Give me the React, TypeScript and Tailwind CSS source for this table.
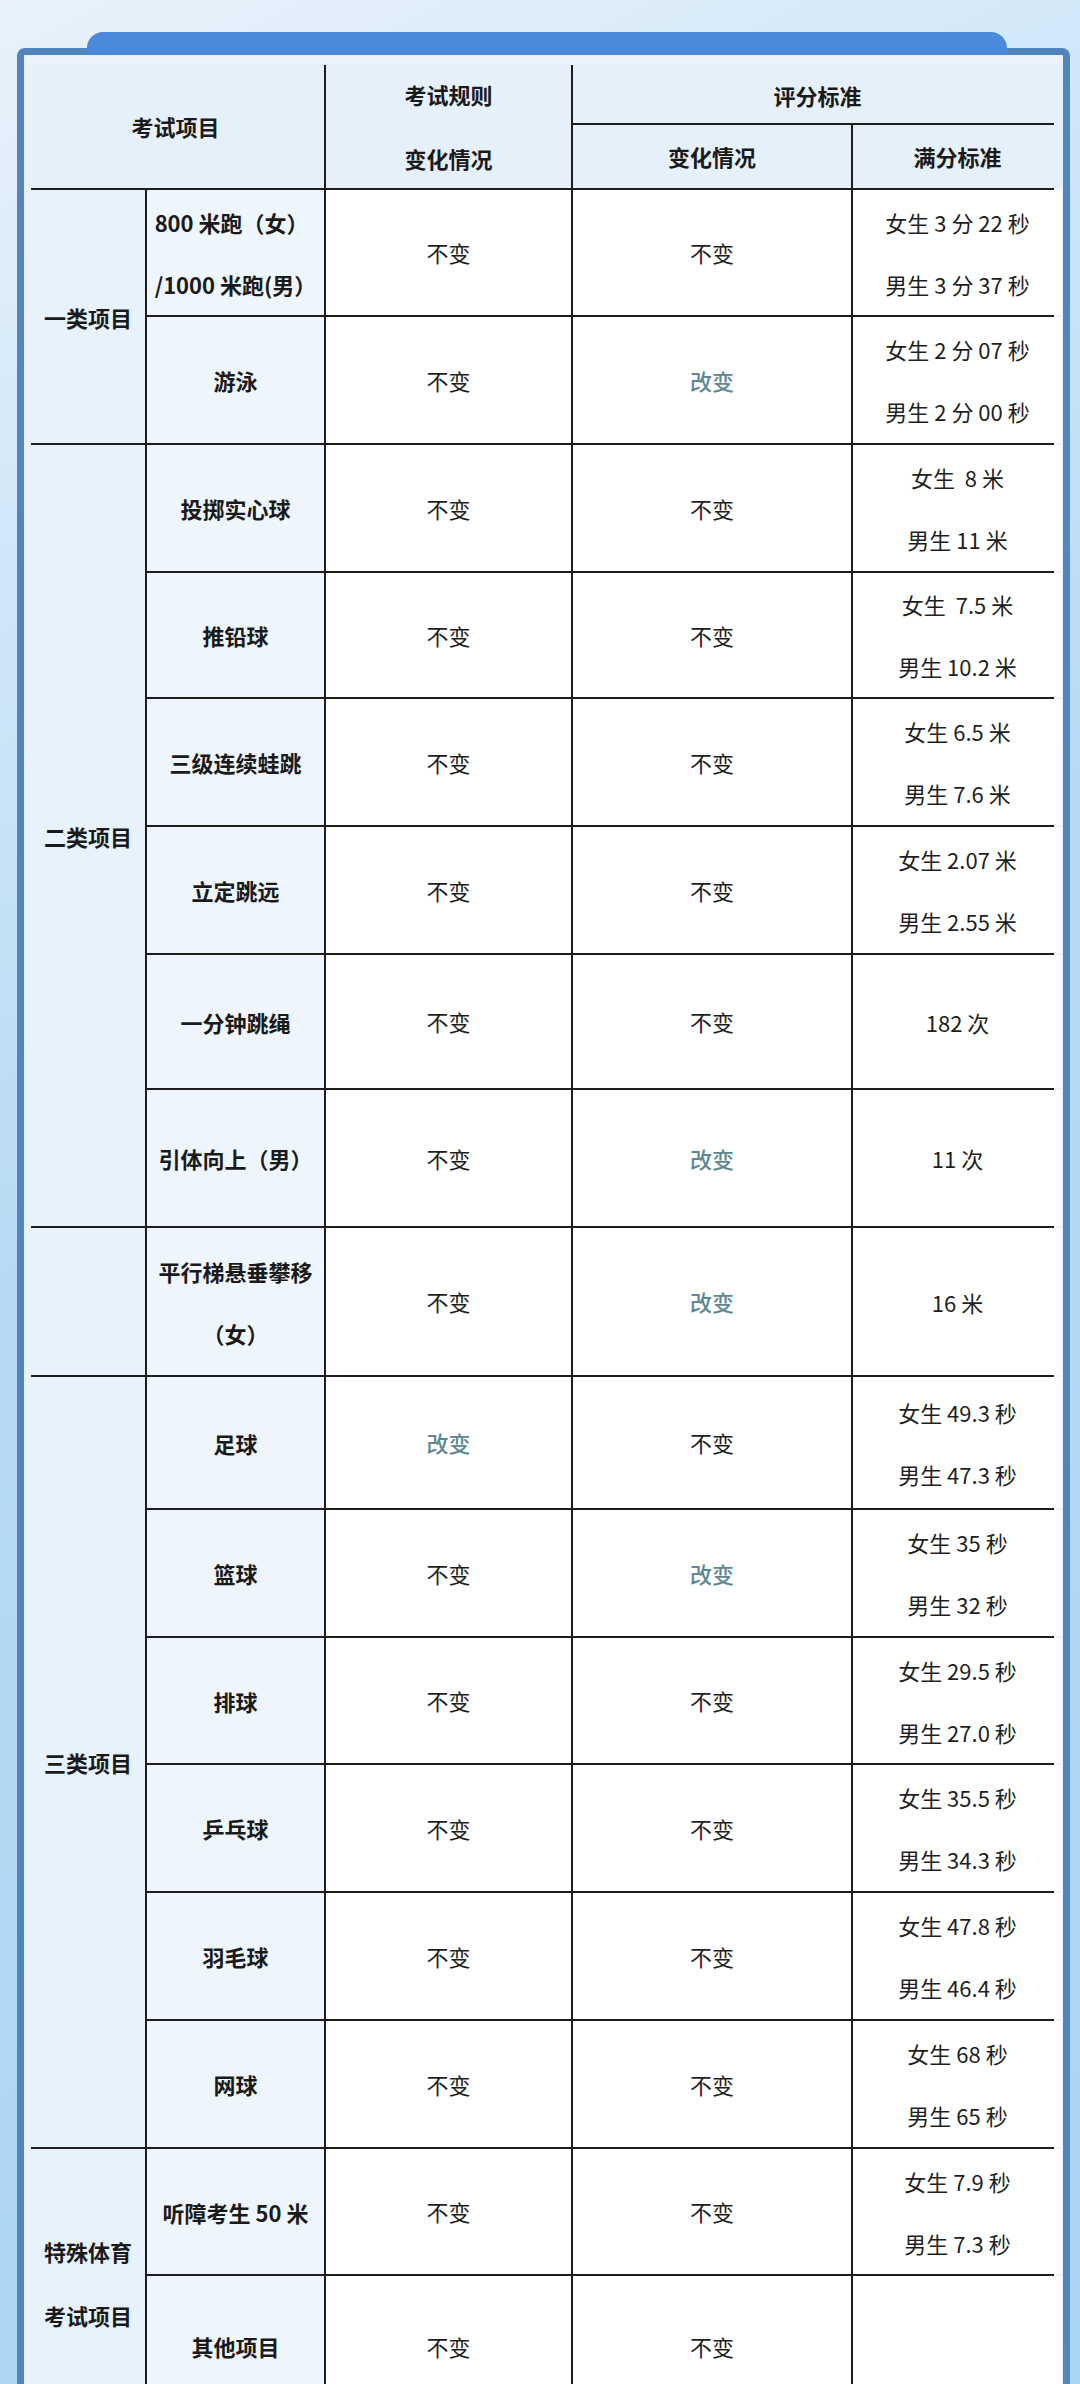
import type { ReactNode } from 'react'

interface BodyRow {
  row: string
  item: ReactNode
  rule: string
  score: string
  full: string[]
}

const rows: BodyRow[] = [
  {
    row: 'row-start-3',
    item: (
      <div className="text-left">
        <div>800 米跑（女）</div>
        <div>/1000 米跑(男）</div>
      </div>
    ),
    rule: '不变',
    score: '不变',
    full: ['女生 3 分 22 秒', '男生 3 分 37 秒'],
  },
  { row: 'row-start-4', item: '游泳', rule: '不变', score: '改变', full: ['女生 2 分 07 秒', '男生 2 分 00 秒'] },
  { row: 'row-start-5', item: '投掷实心球', rule: '不变', score: '不变', full: ['女生\u00a0\u00a08 米', '男生 11 米'] },
  { row: 'row-start-6', item: '推铅球', rule: '不变', score: '不变', full: ['女生\u00a0\u00a07.5 米', '男生 10.2 米'] },
  { row: 'row-start-7', item: '三级连续蛙跳', rule: '不变', score: '不变', full: ['女生 6.5 米', '男生 7.6 米'] },
  { row: 'row-start-8', item: '立定跳远', rule: '不变', score: '不变', full: ['女生 2.07 米', '男生 2.55 米'] },
  { row: 'row-start-9', item: '一分钟跳绳', rule: '不变', score: '不变', full: ['182 次'] },
  { row: 'row-start-10', item: '引体向上（男）', rule: '不变', score: '改变', full: ['11 次'] },
  {
    row: 'row-start-11',
    item: (
      <div>
        <div>平行梯悬垂攀移</div>
        <div>（女）</div>
      </div>
    ),
    rule: '不变',
    score: '改变',
    full: ['16 米'],
  },
  { row: 'row-start-12', item: '足球', rule: '改变', score: '不变', full: ['女生 49.3 秒', '男生 47.3 秒'] },
  { row: 'row-start-13', item: '篮球', rule: '不变', score: '改变', full: ['女生 35 秒', '男生 32 秒'] },
  { row: 'row-start-14', item: '排球', rule: '不变', score: '不变', full: ['女生 29.5 秒', '男生 27.0 秒'] },
  { row: 'row-start-15', item: '乒乓球', rule: '不变', score: '不变', full: ['女生 35.5 秒', '男生 34.3 秒'] },
  { row: 'row-start-16', item: '羽毛球', rule: '不变', score: '不变', full: ['女生 47.8 秒', '男生 46.4 秒'] },
  { row: 'row-start-17', item: '网球', rule: '不变', score: '不变', full: ['女生 68 秒', '男生 65 秒'] },
  { row: 'row-start-18', item: '听障考生 50 米', rule: '不变', score: '不变', full: ['女生 7.9 秒', '男生 7.3 秒'] },
  { row: 'row-start-19', item: '其他项目', rule: '不变', score: '不变', full: [] },
]

const groups = [
  { cls: 'row-start-3 row-span-2', lines: ['一类项目'] },
  { cls: 'row-start-5 row-span-6', lines: ['二类项目'] },
  { cls: 'row-start-11', lines: [] as string[] },
  { cls: 'row-start-12 row-span-6', lines: ['三类项目'] },
  { cls: 'row-start-18 row-span-2', lines: ['特殊体育', '考试项目'] },
]

function Change({ text }: { text: string }) {
  if (text === '改变') {
    return <span className="font-medium text-[#5b8893]">{text}</span>
  }
  return <span className="text-[#1f1f1f]">{text}</span>
}

export default function App() {
  return (
    <div className="h-[2384px] w-[1080px] overflow-hidden bg-[linear-gradient(155deg,#e9f2fb_0%,#d3e8f8_18%,#b7daf4_45%,#a9d5f4_100%)] pt-[48px] pl-[17px] font-['Noto_Sans_CJK_SC','Noto_Sans',sans-serif] text-[22px]">
      {/* frame */}
      <div className="relative w-[1053px] min-h-[2400px] rounded-t-[8px] border-x-[7px] border-t-[7px] border-[#5086bd] bg-[#eaf3fd] pt-[10px] pl-[7px]">
        {/* tab on top of the frame */}
        <div className="absolute top-[-23px] left-[63px] h-[23px] w-[920px] rounded-t-[16px] bg-[#4a89dc]" />

        <div className="grid w-[1023px] grid-cols-[114px_177px_245px_278px_209px] grid-rows-[58px_63px_125px_126px_126px_124px_126px_126px_133px_136px_147px_131px_126px_125px_126px_126px_126px_125px_140px] gap-[2px] bg-[#1e1e1e]">
          {/* header */}
          <div className="col-span-2 col-start-1 row-span-2 row-start-1 flex items-center justify-center bg-[#e6f0fb] pr-[4px] font-bold text-[#1a1a1a]">
            考试项目
          </div>
          <div className="col-start-3 row-span-2 row-start-1 flex flex-col items-center justify-center bg-[#e6f0fb] pb-[2px] font-bold leading-[64px] text-[#1a1a1a]">
            <div>考试规则</div>
            <div>变化情况</div>
          </div>
          <div className="col-span-2 col-start-4 row-start-1 flex items-center justify-center bg-[#e6f0fb] pt-[2px] font-bold text-[#1a1a1a]">
            评分标准
          </div>
          <div className="col-start-4 row-start-2 flex items-center justify-center bg-[#e6f0fb] font-bold text-[#1a1a1a]">
            变化情况
          </div>
          <div className="col-start-5 row-start-2 flex items-center justify-center bg-[#e6f0fb] font-bold text-[#1a1a1a]">
            满分标准
          </div>

          {/* group column */}
          {groups.map((g, i) => (
            <div
              key={i}
              className={`${g.cls} col-start-1 flex flex-col items-center justify-center bg-[#e8f2fc] font-bold leading-[64px] text-[#1a1a1a]`}
            >
              {g.lines.map((l) => (
                <div key={l}>{l}</div>
              ))}
            </div>
          ))}

          {/* body rows */}
          {rows.map((r, i) => (
            <div key={i} className="contents">
              <div className={`${r.row} col-start-2 flex items-center justify-center bg-[#eef5fc] text-center font-bold leading-[62px] text-[#1a1a1a]`}>
                {r.item}
              </div>
              <div className={`${r.row} col-start-3 flex items-center justify-center bg-white`}>
                <Change text={r.rule} />
              </div>
              <div className={`${r.row} col-start-4 flex items-center justify-center bg-white`}>
                <Change text={r.score} />
              </div>
              <div className={`${r.row} col-start-5 flex flex-col items-center justify-center bg-white leading-[62px] text-[#1f1f1f]`}>
                {r.full.map((f) => (
                  <div key={f} className="whitespace-pre">
                    {f}
                  </div>
                ))}
              </div>
            </div>
          ))}
        </div>
      </div>
    </div>
  )
}
